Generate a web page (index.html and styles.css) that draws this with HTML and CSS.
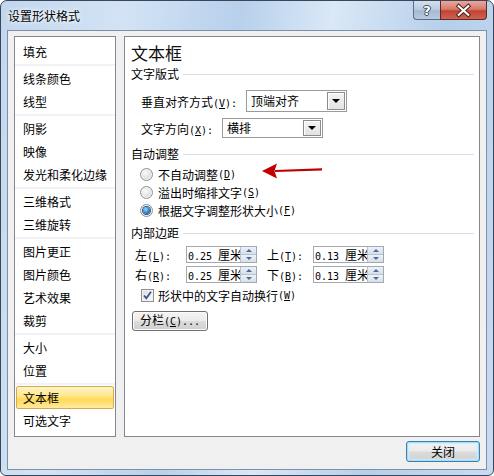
FILE: index.html
```html
<!DOCTYPE html>
<html lang="zh-CN">
<head>
<meta charset="utf-8">
<title>设置形状格式</title>
<link rel="stylesheet" href="styles.css">
</head>
<body>
<div class="window">
  <div class="titlebar">
    <span class="title">设置形状格式</span>
    <div class="caps">
      <div class="cap help"><span>?</span></div>
      <div class="cap close">
        <svg width="47" height="19" viewBox="0 0 47 19"><path d="M18.5 5 L28.5 14 M28.5 5 L18.5 14" stroke="#4a2420" stroke-width="4.2" stroke-linecap="square"/><path d="M18.5 5 L28.5 14 M28.5 5 L18.5 14" stroke="#fff" stroke-width="2.2" stroke-linecap="square"/></svg>
      </div>
    </div>
  </div>
  <div class="client">
    <div class="main">
      <div class="nav">
        <div class="item">填充</div>
        <div class="sep"></div>
        <div class="item">线条颜色</div>
        <div class="item">线型</div>
        <div class="sep"></div>
        <div class="item">阴影</div>
        <div class="item">映像</div>
        <div class="item">发光和柔化边缘</div>
        <div class="sep"></div>
        <div class="item">三维格式</div>
        <div class="item">三维旋转</div>
        <div class="sep"></div>
        <div class="item">图片更正</div>
        <div class="item">图片颜色</div>
        <div class="item">艺术效果</div>
        <div class="item">裁剪</div>
        <div class="sep"></div>
        <div class="item">大小</div>
        <div class="item">位置</div>
        <div class="sep"></div>
        <div class="item selected">文本框</div>
        <div class="item">可选文字</div>
      </div>
      <div class="panel">
        <div class="heading">文本框</div>
        <div class="section">文字版式</div>
        <div class="row row-valign">
          <span class="lbl lbl-valign">垂直对齐方式<span class="a">(<u>V</u>):</span></span>
          <div class="combo combo-tall"><span class="combo-text">顶端对齐</span><span class="combo-btn"><i></i></span></div>
        </div>
        <div class="row row-dir">
          <span class="lbl lbl-dir">文字方向<span class="a">(<u>X</u>):</span></span>
          <div class="combo"><span class="combo-text">横排</span><span class="combo-btn"><i></i></span></div>
        </div>
        <div class="section section-auto">自动调整</div>
        <div class="radios">
          <div class="radio-row"><span class="radio"></span>不自动调整<span class="a">(<u>D</u>)</span></div>
          <div class="radio-row"><span class="radio"></span>溢出时缩排文字<span class="a">(<u>S</u>)</span></div>
          <div class="radio-row"><span class="radio checked"></span>根据文字调整形状大小<span class="a">(<u>F</u>)</span></div>
        </div>
        <div class="section section-margin">内部边距</div>
        <div class="spin-row spin-row-first">
          <span class="slbl slbl-l">左<span class="a">(<u>L</u>):</span></span>
          <div class="spin"><span class="spin-text"><span class="a num">0.25</span>厘米</span><span class="spin-btns"><span class="up"></span><span class="down"></span></span></div>
          <span class="slbl slbl-r">上<span class="a">(<u>T</u>):</span></span>
          <div class="spin"><span class="spin-text"><span class="a num">0.13</span>厘米</span><span class="spin-btns"><span class="up"></span><span class="down"></span></span></div>
        </div>
        <div class="spin-row">
          <span class="slbl slbl-l">右<span class="a">(<u>R</u>):</span></span>
          <div class="spin"><span class="spin-text"><span class="a num">0.25</span>厘米</span><span class="spin-btns"><span class="up"></span><span class="down"></span></span></div>
          <span class="slbl slbl-r">下<span class="a">(<u>B</u>):</span></span>
          <div class="spin"><span class="spin-text"><span class="a num">0.13</span>厘米</span><span class="spin-btns"><span class="up"></span><span class="down"></span></span></div>
        </div>
        <div class="check-row">
          <span class="check"><svg width="11" height="11" viewBox="0 0 11 11"><path d="M2 5.5 L4.3 8.2 L9 1.8" fill="none" stroke="#3b5693" stroke-width="1.8"/></svg></span>形状中的文字自动换行<span class="a">(<u>W</u>)</span>
        </div>
        <button class="btn btn-cols">分栏<span class="a">(<u>C</u>)...</span></button>
        <svg class="arrow" width="64" height="18" viewBox="0 0 64 18"><path d="M13 9 L60 7.3" stroke="#c00000" stroke-width="2.2"/><path d="M0 9 L15 1.5 L12.5 9 L15 16.5 Z" fill="#c00000"/></svg>
      </div>
    </div>
    <div class="footer">
      <button class="btn btn-default">关闭</button>
    </div>
  </div>
</div>
</body>
</html>
```

FILE: styles.css
```css
* { box-sizing: border-box; }

body {
  margin: 0;
  font-family: "Noto Sans CJK SC", "Microsoft YaHei", sans-serif;
  font-size: 12px;
  color: #000;
}

.window {
  width: 494px;
  height: 476px;
  border: 1px solid #3a4759;
  border-radius: 7px 7px 6px 6px;
  background: linear-gradient(100deg, #c2d7ee 0%, #d3e3f5 22%, #b7d0ec 42%, #dae8f7 58%, #b6cfeb 78%, #c8dbf1 100%);
  padding: 0 6px 5px;
  display: flex;
  flex-direction: column;
  overflow: hidden;
}

.titlebar {
  height: 29px;
  flex: none;
  display: flex;
  justify-content: space-between;
  align-items: flex-start;
}

.title {
  padding: 6px 0 0 1px;
  line-height: 18px;
  font-size: 12px;
  text-shadow: 0 0 6px #fff, 0 0 3px #fff;
}

.caps { display: flex; }

.cap {
  height: 19px;
  border: 1px solid #5b6c82;
  border-top: none;
  display: flex;
  align-items: center;
  justify-content: center;
}

.help {
  width: 27px;
  border-right: none;
  border-radius: 0 0 0 4px;
  background: linear-gradient(#d2dfee 0%, #bccde2 45%, #a5b9d2 55%, #b8cbe0 100%);
}

.help span {
  font-family: "DejaVu Sans", sans-serif;
  font-weight: bold;
  font-size: 13px;
  line-height: 17px;
  color: #fff;
  text-shadow: 1px 0 #3c4a5e, -1px 0 #3c4a5e, 0 1px #3c4a5e, 0 -1px #3c4a5e;
}

.close {
  width: 47px;
  border-color: #5a2a25;
  border-radius: 0 0 4px 0;
  background: linear-gradient(#e8a89d 0%, #d97a6c 45%, #c34332 55%, #d3614f 100%);
}

.close svg { display: block; }

.client {
  flex: 1;
  border: 1px solid #7d90a8;
  background: #f0f0f0;
  padding: 5px 6px 0;
  display: flex;
  flex-direction: column;
}

.main {
  height: 401px;
  flex: none;
  display: flex;
  gap: 8px;
}

.nav {
  width: 102px;
  flex: none;
  border: 1px solid #828790;
  background: #fff;
  padding-top: 3px;
}

.item {
  height: 23px;
  line-height: 23px;
  padding-left: 8px;
  white-space: nowrap;
}

.item.selected {
  margin: 0 1px;
  padding-left: 6px;
  line-height: 21px;
  border: 1px solid #d4aa4e;
  border-radius: 2px;
  background: linear-gradient(#fff3c6 0%, #ffe890 40%, #ffd959 60%, #ffeaa0 100%);
}

.sep {
  height: 4px;
  padding: 1px 0;
}

.sep::before {
  content: "";
  display: block;
  height: 2px;
  background: #f1f1f6;
}

.panel {
  flex: 1;
  position: relative;
  border: 1px solid #828790;
  background: #fff;
  padding: 6px 6px 0;
}

.heading {
  font-size: 17px;
  line-height: 20px;
  color: #111;
}

.section {
  margin-top: 3px;
  line-height: 16px;
  display: flex;
  align-items: center;
}

.section::after {
  content: "";
  flex: 1;
  height: 1px;
  background: #d5dfe6;
  margin-left: 4px;
  margin-right: -1px;
}

.section-auto { margin-top: 8px; }
.section-margin { margin-top: 6px; }

.a {
  font-family: "DejaVu Sans Mono", monospace;
  font-size: 10px;
}

.num { margin-right: 6px; }

.row {
  display: flex;
  align-items: center;
  padding-left: 10px;
}

.row-valign { margin-top: 8px; height: 22px; }
.row-dir { margin-top: 6px; height: 20px; }

.lbl { flex: none; white-space: nowrap; }
.lbl-valign { width: 105px; }
.lbl-dir { width: 81px; }

.combo {
  width: 101px;
  height: 20px;
  border: 1px solid #9a9a9a;
  background: #fff;
  display: flex;
  align-items: center;
  justify-content: space-between;
  padding: 0 1px 0 4px;
}

.combo-tall { height: 22px; }

.combo-text { line-height: 16px; }

.combo-btn {
  width: 18px;
  height: calc(100% - 2px);
  border: 1px solid #8c8c8c;
  background: linear-gradient(#f4f4f4, #e3e3e3);
  box-shadow: inset 1px 1px #fff;
  display: flex;
  align-items: center;
  justify-content: center;
}

.combo-btn i {
  width: 0;
  height: 0;
  border-left: 4px solid transparent;
  border-right: 4px solid transparent;
  border-top: 4px solid #000;
}

.radios {
  margin-top: 3px;
  padding-left: 9px;
}

.radio-row {
  height: 18px;
  display: flex;
  align-items: center;
  white-space: nowrap;
}

.radio {
  width: 13px;
  height: 13px;
  flex: none;
  border-radius: 50%;
  border: 1px solid #8e8f8f;
  background: radial-gradient(circle at 40% 35%, #fbfbfb 0%, #e6e6e6 45%, #cfcfcf 100%);
  box-shadow: inset 0 0 0 1px #f4f4f4;
  margin-right: 5px;
  display: flex;
  align-items: center;
  justify-content: center;
}

.radio.checked::before {
  content: "";
  width: 7px;
  height: 7px;
  border-radius: 50%;
  background: radial-gradient(circle at 40% 35%, #a6dcff 0%, #3a8fd6 45%, #11467f 100%);
  box-shadow: 0 0 0 1px #2a5a8a;
}

.spin-row {
  display: flex;
  align-items: center;
  height: 17px;
  margin-top: 3px;
  padding-left: 4px;
}

.spin-row-first { margin-top: 5px; }

.slbl { flex: none; white-space: nowrap; }
.slbl-l { width: 51px; }
.slbl-r { width: 46px; margin-left: 10px; }

.spin {
  width: 71px;
  height: 17px;
  flex: none;
  border: 1px solid #a3a9b1;
  background: #fff;
  display: flex;
}

.spin-text {
  flex: 1;
  overflow: hidden;
  white-space: nowrap;
  padding-left: 1px;
  line-height: 15px;
}

.spin-btns {
  width: 16px;
  flex: none;
  display: flex;
  flex-direction: column;
  border-left: 1px solid #b7c3d3;
}

.spin-btns span {
  flex: 1;
  background: linear-gradient(#eef2f7, #d6dfea);
  display: flex;
  align-items: center;
  justify-content: center;
}

.spin-btns .up { border-bottom: 1px solid #b7c3d3; }

.spin-btns .up::before {
  content: "";
  border-left: 3px solid transparent;
  border-right: 3px solid transparent;
  border-bottom: 3px solid #4d6a9c;
}

.spin-btns .down::before {
  content: "";
  border-left: 3px solid transparent;
  border-right: 3px solid transparent;
  border-top: 3px solid #4d6a9c;
}

.check-row {
  margin-top: 4px;
  height: 16px;
  padding-left: 10px;
  display: flex;
  align-items: center;
  white-space: nowrap;
}

.check {
  width: 13px;
  height: 13px;
  flex: none;
  border: 1px solid #8e8f8f;
  background: linear-gradient(135deg, #dcdcdc, #fbfbfb);
  box-shadow: inset 0 0 0 1px #f2f2f2;
  margin-right: 4px;
  display: flex;
  align-items: center;
  justify-content: center;
}

.check svg { display: block; }

.btn {
  font-family: "Noto Sans CJK SC", sans-serif;
  font-size: 12px;
  color: #000;
  border: 1px solid #707070;
  border-radius: 3px;
  background: linear-gradient(#f4f4f4 0%, #ebebeb 48%, #dcdcdc 52%, #cfcfcf 100%);
  box-shadow: inset 0 0 0 1px #fbfbfb;
  padding: 0;
  line-height: 16px;
}

.btn-cols {
  display: block;
  margin: 8px 0 0 1px;
  width: 76px;
  height: 20px;
}

.arrow {
  position: absolute;
  left: 137px;
  top: 125px;
}

.footer {
  display: flex;
  justify-content: flex-end;
  margin-top: 4px;
}

.btn-default {
  width: 74px;
  height: 21px;
  border-color: #3c7fb1;
  box-shadow: inset 0 0 0 1px #a6dcf5, inset 0 0 2px 2px #cdeefc;
}
```
